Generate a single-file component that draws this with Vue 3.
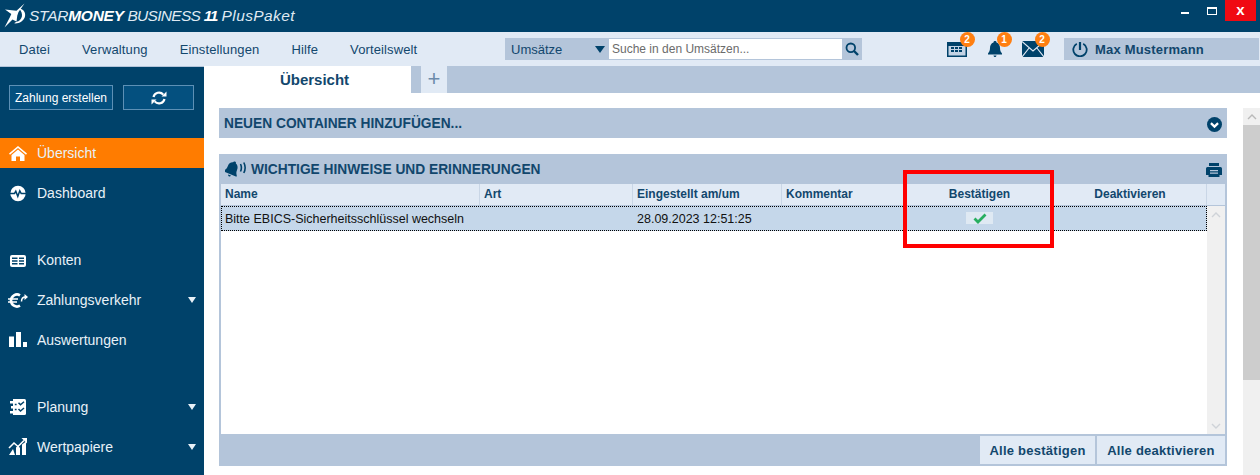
<script setup>
const menu = ['Datei', 'Verwaltung', 'Einstellungen', 'Hilfe', 'Vorteilswelt']
const cols = [
  { label: 'Name' },
  { label: 'Art' },
  { label: 'Eingestellt am/um' },
  { label: 'Kommentar' },
  { label: 'Bestätigen', center: true },
  { label: 'Deaktivieren', center: true },
  { label: '' }
]
</script>

<template>
  <div class="app">
    <header class="titlebar">
      <svg class="logo" viewBox="0 0 26 26" width="26" height="26">
        <path fill="#fff" d="M21.500.5 13.500 7.700 2 6.500 8.300 11 7 14 1.500 24.500 9.500 16.500 13.500 18.500 14.300 12.500 15.500 9Z" />
        <path fill="#fff" d="M16 5.500C20.800 6 23.200 10 21.800 14.300 20.300 18.500 15.500 21 11 20.300L13.500 18.800C16.300 18.500 18.300 16 18.900 13.500 19.400 11 18.500 8 16 5.500Z" />
      </svg>
      <div class="brand"><span>STAR</span><b>MONEY</b><span class="b-bus"> BUSINESS </span><b class="b-num">11</b><span class="b-plus"> PlusPaket</span></div>
      <div class="winctl">
        <i class="win-min"></i>
        <i class="win-max"></i>
        <div class="win-close">x</div>
      </div>
    </header>

    <nav class="menubar">
      <div class="menu">
        <span v-for="m in menu" :key="m">{{ m }}</span>
      </div>
      <div class="search">
        <div class="search-sel"><span>Umsätze</span><i class="tri"></i></div>
        <div class="search-input">Suche in den Umsätzen...</div>
        <div class="search-btn">
          <svg viewBox="0 0 14 14" width="14" height="14"><circle cx="5.800" cy="5.800" r="4.300" fill="none" stroke="#00426a" stroke-width="1.800" /><path d="M9 9l4 4" stroke="#00426a" stroke-width="2.400" /></svg>
        </div>
      </div>
      <div class="notify">
        <div class="nicon cal">
          <svg viewBox="0 0 20 16" width="20" height="16">
            <path fill="#00426a" d="M0 1h20v15H0z" />
            <path fill="#c3d3e4" d="M1.500 5h17v9.500h-17z" />
            <path fill="#00426a" d="M4 6h3v2H4zM8 6h3v2H8zM12 6h3v2h-3zM4 9h3v2H4zM8 9h3v2H8zM12 9h3v2h-3z" />
          </svg>
          <b class="badge">2</b>
        </div>
        <div class="nicon bell">
          <svg viewBox="0 0 14 16" width="14" height="16">
            <path fill="#00426a" d="M7 0c1 0 1.500.6 1.500 1.400C11 2.200 12 4.500 12 7c0 2.500.8 4 2 5.500v1H0v-1C1.200 11 2 9.500 2 7c0-2.500 1-4.800 3.500-5.600C5.500.6 6 0 7 0ZM5.500 14.500h3c0 .9-.7 1.500-1.500 1.500s-1.500-.6-1.500-1.500Z" />
          </svg>
          <b class="badge">1</b>
        </div>
        <div class="nicon mail">
          <svg viewBox="0 0 22 16" width="22" height="16">
            <path fill="#00426a" d="M0 0h22v16H0z" />
            <path d="M0 .5l11 9.500L22 .5M0 16l7.500-9.500M22 16 14.500 6.500" fill="none" stroke="#e1eaf5" stroke-width="1.100" />
          </svg>
          <b class="badge">2</b>
        </div>
      </div>
      <div class="user">
        <svg viewBox="0 0 16 16" width="16" height="16">
          <path d="M4.800 2.700a6.700 6.700 0 1 0 6.400 0" fill="none" stroke="#00426a" stroke-width="1.800" />
          <path d="M8 1v8" stroke="#00426a" stroke-width="2.200" />
        </svg>
        <span>Max Mustermann</span>
      </div>
    </nav>

    <div class="body">
      <aside class="side">
        <div class="side-actions">
          <button class="btn-create">Zahlung erstellen</button>
          <button class="btn-refresh">
            <svg viewBox="0 0 16 16" width="16" height="16">
              <path fill="none" stroke="#fff" stroke-width="2.200" d="M2.500 7a5.600 5.600 0 0 1 9.800-2.400M13.500 9a5.600 5.600 0 0 1-9.800 2.400" />
              <path fill="#fff" d="M10.500 6.500h5v-5zM5.500 9.500h-5v5z" />
            </svg>
          </button>
        </div>

        <div class="side-item active">
          <svg viewBox="0 0 20 18"><path fill="#fff" d="M10 2 19 9.500 18 10.800 10 4 2 10.800 1 9.500ZM10 5.500 16.500 11V17H12V12.500H8V17H3.500V11Z" /></svg>
          <span>Übersicht</span>
        </div>
        <div class="side-item">
          <svg viewBox="0 0 20 18"><circle cx="10" cy="9.500" r="7.700" fill="#fff" /><path d="M2 9.500h4.500l1.300-2.200 2 5 2-5.500 1.400 2.700H18" fill="none" stroke="#00426a" stroke-width="1.500" /></svg>
          <span>Dashboard</span>
        </div>

        <div class="side-item gap">
          <svg viewBox="0 0 20 18"><path fill="#fff" d="M4 4h12a2 2 0 0 1 2 2v8a2 2 0 0 1-2 2H4a2 2 0 0 1-2-2V6a2 2 0 0 1 2-2Z" /><path fill="#00426a" d="M4 6.500h5.500v1.600H4zM4 9.200h5.500v1.600H4zM4 11.900h5.500v1.600H4zM11 6.500h5v1.600h-5zM11 9.200h5v1.600h-5zM11 11.900h5v1.600h-5z" /></svg>
          <span>Konten</span>
        </div>
        <div class="side-item">
          <svg viewBox="0 0 20 18">
            <path fill="none" stroke="#fff" stroke-width="2.600" d="M12 4.300A6 6 0 1 0 12 14.700" />
            <path stroke="#fff" stroke-width="1.700" d="M0 8h10M0 11h9" />
            <path fill="none" stroke="#fff" stroke-width="1.500" d="M13.500 10.500c0-3 1.800-4.500 4-4.500" />
            <path fill="#fff" d="M16.500 3l3.500 3-3.500 3z" />
          </svg>
          <span>Zahlungsverkehr</span>
          <i class="side-arrow"></i>
        </div>
        <div class="side-item">
          <svg viewBox="0 0 20 18"><path fill="#fff" d="M1 5.500h5V16H1zM8 1h5v15H8zM15 11h4v5h-4z" /></svg>
          <span>Auswertungen</span>
        </div>

        <div class="side-item gap">
          <svg viewBox="0 0 20 18"><path fill="#fff" d="M5 1h11.500A1.500 1.500 0 0 1 18 2.500v13a1.500 1.500 0 0 1-1.500 1.500H5Z" /><path fill="#fff" d="M2 3h5v2.400H2zM3 8h4v2.400H3zM2 13h5v2.400H2z" /><path fill="none" stroke="#00426a" stroke-width="1.500" d="M10.500 4.800l2 2 3.500-3M10.500 11l2 2 3.500-3M6.800 6.500h1.800M6.800 11.500h1.800" /></svg>
          <span>Planung</span>
          <i class="side-arrow"></i>
        </div>
        <div class="side-item">
          <svg viewBox="0 0 20 18"><path fill="#fff" d="M1 17 5 11l2 6ZM8 17V9.500l2-2 2 2.500V17ZM14 17V6.500l4-3V17Z" /><path fill="none" stroke="#fff" stroke-width="1.600" d="M1 10 6 5l4 3.500 6-6" /><path fill="#fff" d="M13.500 0h5.500v5.500z" /></svg>
          <span>Wertpapiere</span>
          <i class="side-arrow"></i>
        </div>
      </aside>

      <main class="main">
        <div class="tabs">
          <div class="tab">Übersicht</div>
          <div class="tab-add">+</div>
        </div>

        <div class="content">
          <div class="panels">
            <section class="panel-collapsed">
              <h2>NEUEN CONTAINER HINZUFÜGEN...</h2>
              <svg viewBox="0 0 16 16" width="15" height="15"><circle cx="8" cy="8" r="8" fill="#00426a" /><path d="M4.200 6.500 8 10.300l3.800-3.800" fill="none" stroke="#fff" stroke-width="2.400" /></svg>
            </section>

            <section class="panel">
              <div class="panel-head">
                <svg class="speaker" viewBox="0 0 22 16" width="22" height="16">
                  <g transform="rotate(22 7 8)">
                    <path fill="#00426a" d="M7 0c1 0 1.500.6 1.500 1.400C11 2.200 12 4.500 12 7c0 2.500.8 4 2 5.500v1H0v-1C1.200 11 2 9.500 2 7c0-2.500 1-4.800 3.500-5.600C5.500.6 6 0 7 0ZM5.500 14.500h3c0 .9-.7 1.500-1.500 1.500s-1.500-.6-1.500-1.500Z" />
                  </g>
                  <path fill="none" stroke="#00426a" stroke-width="1.600" d="M15.500 3c1.200 2.500 1.200 5 0 7.500M18.800 1.500c1.800 3.500 1.800 7 0 10.500" />
                </svg>
                <h2>WICHTIGE HINWEISE UND ERINNERUNGEN</h2>
                <svg class="print" viewBox="0 0 16 14" width="16" height="14">
                  <path fill="#00426a" d="M3 0h10v3H3zM1.500 4h13A1.500 1.500 0 0 1 16 5.500V12h-2.500v2h-11v-2H0V5.500A1.500 1.500 0 0 1 1.500 4Z" />
                  <path fill="#b4c5da" d="M4 7h8v1.200H4zM4 9.500h8v1.200H4z" />
                </svg>
              </div>

              <div class="grid-box">
                <div class="grid-head">
                  <div v-for="c in cols" :key="c.label" :class="['th', { center: c.center }]">{{ c.label }}</div>
                </div>
                <div class="grid-body">
                  <div class="rows">
                    <div class="row">
                      <div class="td">Bitte EBICS-Sicherheitsschlüssel wechseln</div>
                      <div class="td"></div>
                      <div class="td">28.09.2023 12:51:25</div>
                      <div class="td"></div>
                      <div class="td center">
                        <span class="confirm">
                          <svg viewBox="0 0 14 11" width="14" height="11"><path d="M1.500 5.500 5 9l7.500-7.500" fill="none" stroke="#27ae60" stroke-width="2.800" /></svg>
                        </span>
                      </div>
                      <div class="td"></div>
                    </div>
                  </div>
                  <div class="vscroll">
                    <svg viewBox="0 0 10 6" width="10" height="6"><path d="M1 5l4-4 4 4" fill="none" stroke="#cfd3d8" stroke-width="1.400" /></svg>
                    <svg viewBox="0 0 10 6" width="10" height="6"><path d="M1 1l4 4 4-4" fill="none" stroke="#cfd3d8" stroke-width="1.400" /></svg>
                  </div>
                </div>
              </div>

              <div class="panel-foot">
                <button>Alle bestätigen</button>
                <button>Alle deaktivieren</button>
              </div>
            </section>
          </div>

          <div class="page-scroll">
            <div class="ps-up">
              <svg viewBox="0 0 10 6" width="10" height="6"><path d="M1 5l4-4 4 4" fill="none" stroke="#b9b9b9" stroke-width="1.400" /></svg>
            </div>
            <div class="ps-thumb"></div>
          </div>

          <div class="highlight"></div>
        </div>
      </main>
    </div>
  </div>
</template>

<style>
html, body { margin: 0; padding: 0; background: #fff; overflow: hidden; }
</style>

<style scoped>
.app {
  width: 1260px;
  height: 475px;
  overflow: hidden;
  display: flex;
  flex-direction: column;
  font-family: "Liberation Sans", Arial, sans-serif;
  font-size: 13px;
  color: #00426a;
}
.titlebar {
  height: 32px;
  flex: none;
  background: #00426a;
  display: flex;
  align-items: center;
  padding-left: 3px;
  color: #fff;
}
.logo { flex: none; }
.brand {
  font-size: 15.500px;
  font-style: italic;
  white-space: pre;
  letter-spacing: -.25px;
  color: #dfe9f2;
  font-weight: 400;
}
.brand b { font-weight: 700; color: #fff; }
.brand .b-bus { letter-spacing: -.7px; }
.brand .b-num { letter-spacing: -1.500px; }
.brand .b-plus { letter-spacing: .4px; }
.winctl {
  margin-left: auto;
  display: flex;
  align-items: flex-start;
  align-self: flex-start;
  height: 32px;
  padding-right: 4px;
}
.win-min {
  width: 8px;
  height: 2px;
  background: #fff;
  margin: 12px 18px 0 0;
}
.win-max {
  width: 10px;
  height: 8px;
  box-sizing: border-box;
  border: 1px solid #fff;
  border-top-width: 2px;
  margin: 7px 8px 0 0;
}
.win-close {
  width: 31px;
  height: 21px;
  background: #f00a12;
  color: #fff;
  font-weight: 700;
  font-size: 15px;
  line-height: 20px;
  text-align: center;
}
.menubar {
  height: 34px;
  flex: none;
  background: #e1eaf5;
  display: flex;
  align-items: center;
}
.menu {
  width: 505px;
  flex: none;
  display: flex;
  gap: 32px;
  padding-left: 19px;
  box-sizing: border-box;
  color: #12476d;
  letter-spacing: .13px;
}
.search {
  width: 357px;
  height: 22px;
  flex: none;
  display: flex;
  background: #b4c5da;
}
.search-sel {
  width: 104px;
  flex: none;
  box-sizing: border-box;
  padding: 0 4px 0 6px;
  display: flex;
  align-items: center;
  justify-content: space-between;
  color: #12476d;
}
.tri {
  width: 0;
  height: 0;
  border-left: 5px solid transparent;
  border-right: 5px solid transparent;
  border-top: 7px solid #00426a;
}
.search-input {
  width: 233px;
  flex: none;
  height: 20px;
  margin-top: 1px;
  background: #fff;
  color: #6b6b6b;
  font-size: 12px;
  line-height: 20px;
  padding-left: 3px;
  box-sizing: border-box;
}
.search-btn {
  flex: 1;
  display: flex;
  align-items: center;
  justify-content: center;
}
.notify {
  width: 202px;
  flex: none;
  display: flex;
  padding-left: 85px;
  box-sizing: border-box;
}
.nicon { position: relative; height: 16px; }
.cal { margin-right: 21px; }
.bell { margin-right: 20px; }
.badge {
  position: absolute;
  top: -9px;
  left: 12.500px;
  width: 15px;
  height: 15px;
  border-radius: 50%;
  background: #ff7f11;
  color: #fff;
  font-size: 10px;
  line-height: 15px;
  text-align: center;
  font-weight: 700;
}
.bell .badge { left: 8.500px; }
.user {
  width: 195px;
  height: 22px;
  flex: none;
  background: #b4c5da;
  display: flex;
  align-items: center;
  padding-left: 8px;
  box-sizing: border-box;
  gap: 7px;
  font-weight: 700;
  letter-spacing: .2px;
  color: #12476d;
}
.body {
  flex: 1;
  min-height: 0;
  display: flex;
}
.side {
  width: 204px;
  flex: none;
  background: #00426a;
  color: #e8f1f8;
  border-top: 1px solid #b4c5da;
  box-sizing: border-box;
  display: flex;
  flex-direction: column;
  gap: 10px;
}
.side-actions {
  display: flex;
  gap: 10px;
  padding: 18px 0 18px 9px;
}
.side-actions button {
  height: 25px;
  border: 1px solid #5d90b5;
  background: #04507f;
  color: #fff;
  font: 12px "Liberation Sans", Arial, sans-serif;
  padding: 0;
  margin: 0;
  display: flex;
  align-items: center;
  justify-content: center;
}
.btn-create { width: 104px; }
.btn-refresh { width: 71px; }
.side-item {
  height: 30px;
  flex: none;
  display: flex;
  align-items: center;
  padding: 0 8px;
}
.side-item svg {
  width: 20px;
  height: 18px;
  flex: none;
  margin-right: 9px;
}
.side-item span { font-size: 14px; }
.side-item.active { background: #ff7c00; }
.side-item.gap { margin-top: 27px; }
.side-arrow {
  margin-left: auto;
  width: 0;
  height: 0;
  border-left: 4px solid transparent;
  border-right: 4px solid transparent;
  border-top: 6px solid #e8f1f8;
}
.main {
  flex: 1;
  min-width: 0;
  display: flex;
  flex-direction: column;
}
.tabs {
  height: 27px;
  flex: none;
  background: #b4c5da;
  display: flex;
}
.tab {
  width: 207px;
  box-sizing: border-box;
  padding-left: 14px;
  background: #fff;
  font-weight: 700;
  font-size: 15px;
  text-align: center;
  line-height: 27px;
  color: #12476d;
}
.tab-add {
  width: 26px;
  margin-left: 10px;
  background: #e1eaf5;
  color: #6c8bab;
  font-size: 22px;
  text-align: center;
  line-height: 26px;
}
.content {
  flex: 1;
  min-height: 0;
  display: flex;
  position: relative;
  padding: 15px 0 0 15px;
}
.panels {
  width: 1008px;
  flex: none;
  display: flex;
  flex-direction: column;
  gap: 16px;
}
h2 {
  margin: 0;
  font-size: 13.750px;
  font-weight: 700;
  color: #12476d;
}
.panel-collapsed {
  height: 30px;
  background: #b4c5da;
  display: flex;
  align-items: center;
  justify-content: space-between;
  padding: 0 5px;
  box-sizing: border-box;
}
.panel-collapsed svg { margin-top: 2px; }
.panel {
  height: 312px;
  flex: none;
  background: #b4c5da;
  padding: 0 2px;
  box-sizing: border-box;
  display: flex;
  flex-direction: column;
}
.panel-head {
  height: 30px;
  flex: none;
  display: flex;
  align-items: center;
}
.speaker { margin: 0 4px 0 4px; }
.print { margin-left: auto; margin-right: 3px; margin-top: 1px; }
.grid-box {
  flex: 1;
  min-height: 0;
  background: #fff;
  display: flex;
  flex-direction: column;
}
.grid-head {
  display: grid;
  grid-template-columns: 259px 153px 149px 123px 149px 153px 18px;
  height: 22px;
  flex: none;
  background: #e1eaf5;
  border-bottom: 1px solid #b4c5da;
  box-sizing: border-box;
}
.th {
  border-right: 1px solid #c9d6e6;
  padding-left: 4px;
  font-size: 12px;
  font-weight: 700;
  line-height: 21px;
  color: #12476d;
}
.th:nth-child(4),
.th:nth-child(5),
.th:last-child { border-right: none; }
.th.center { text-align: center; padding-left: 0; }
.grid-body {
  flex: 1;
  min-height: 0;
  display: flex;
}
.rows { width: 986px; flex: none; }
.row {
  display: grid;
  height: 25px;
  grid-template-columns: 258px 153px 149px 123px 149px 152px;
  background: #c5d7ea;
  border: 1px dotted #000;
  box-sizing: border-box;
  color: #111;
  font-size: 12.500px;
  align-items: center;
}
.td { padding-left: 3px; }
.td:nth-child(3) { padding-left: 4px; }
.td.center { display: flex; justify-content: center; padding-left: 0; }
.confirm {
  width: 27px;
  height: 12px;
  background: #dfe9f3;
  display: flex;
  align-items: center;
  justify-content: center;
  margin-top: -1px;
}
.vscroll {
  width: 18px;
  flex: none;
  background: #f0f0f0;
  display: flex;
  flex-direction: column;
  align-items: center;
  justify-content: space-between;
  padding: 6px 0 5px;
  box-sizing: border-box;
}
.panel-foot {
  height: 32px;
  flex: none;
  display: flex;
  justify-content: flex-end;
  align-items: center;
  gap: 2px;
}
.panel-foot button {
  height: 28px;
  border: none;
  margin: 0;
  padding: 0;
  background: #e1eaf5;
  color: #12476d;
  font: 700 13px "Liberation Sans", Arial, sans-serif;
  letter-spacing: .25px;
}
.panel-foot button:first-child { width: 115px; }
.panel-foot button:last-child { width: 128px; }
.page-scroll {
  width: 17px;
  margin-left: 16px;
  background: #f0f0f0;
  display: flex;
  flex-direction: column;
}
.ps-up {
  height: 17px;
  display: flex;
  align-items: center;
  justify-content: center;
}
.ps-thumb { height: 255px; background: #cdcdcd; }
.highlight {
  position: absolute;
  left: 699px;
  top: 77px;
  width: 151px;
  height: 78px;
  border: 4px solid #ff0000;
  box-sizing: border-box;
  pointer-events: none;
}
</style>
